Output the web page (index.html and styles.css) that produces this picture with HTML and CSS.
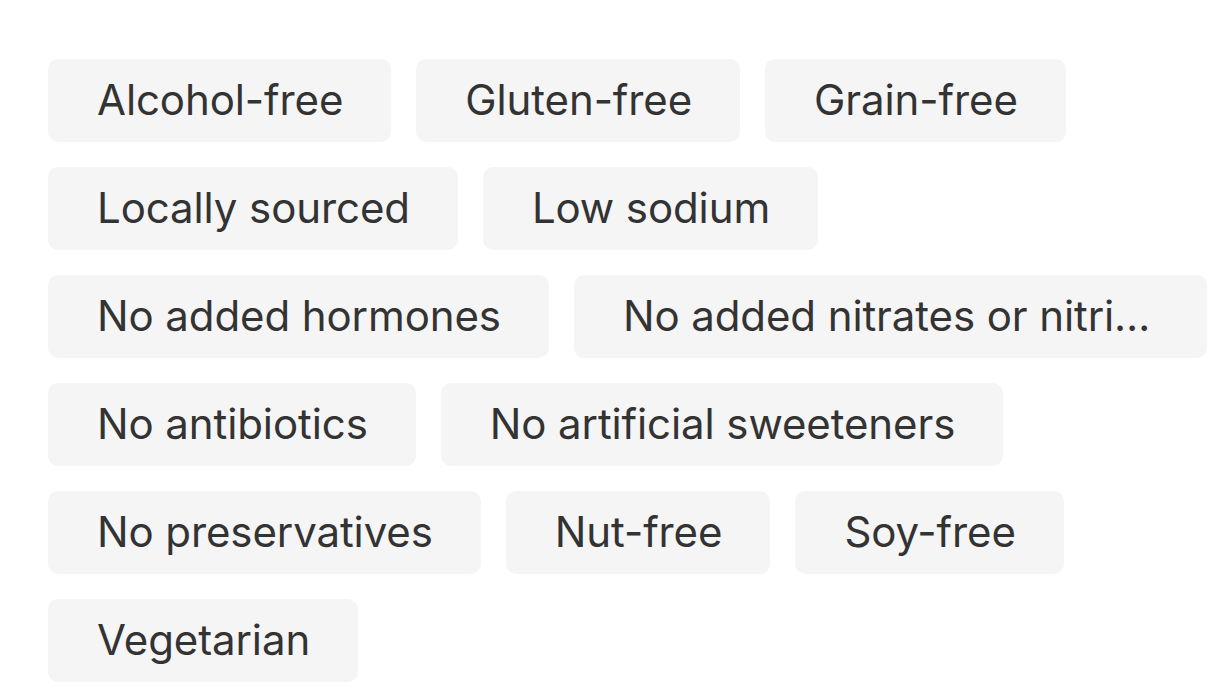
FILE: index.html
```html
<!DOCTYPE html>
<html lang="en">
<head>
<meta charset="utf-8">
<title>Tags</title>
<link rel="stylesheet" href="styles.css">
</head>
<body>
<ul class="tags">
  <li class="tag"><span class="tag-text">Alcohol-free</span></li>
  <li class="tag"><span class="tag-text">Gluten-free</span></li>
  <li class="tag"><span class="tag-text">Grain-free</span></li>
  <li class="tag"><span class="tag-text">Locally sourced</span></li>
  <li class="tag"><span class="tag-text">Low sodium</span></li>
  <li class="tag"><span class="tag-text">No added hormones</span></li>
  <li class="tag"><span class="tag-text">No added nitrates or nitrites</span></li>
  <li class="tag"><span class="tag-text">No antibiotics</span></li>
  <li class="tag"><span class="tag-text">No artificial sweeteners</span></li>
  <li class="tag"><span class="tag-text">No preservatives</span></li>
  <li class="tag"><span class="tag-text">Nut-free</span></li>
  <li class="tag"><span class="tag-text">Soy-free</span></li>
  <li class="tag"><span class="tag-text">Vegetarian</span></li>
</ul>
</body>
</html>
```
FILE: styles.css
```css
html, body {
  margin: 0;
  padding: 0;
  background: #ffffff;
}

body {
  font-family: Inter, "Noto Sans", "Liberation Sans", sans-serif;
  color: #333333;
}

.tags {
  list-style: none;
  margin: 0;
  padding: 59px 17px 0 48px;
  display: flex;
  flex-wrap: wrap;
  gap: 25px;
}

.tag {
  box-sizing: border-box;
  height: 83px;
  max-width: 633px;
  padding: 0 48px 0 49px;
  background: #f5f5f5;
  border-radius: 10px;
  display: flex;
  align-items: center;
  min-width: 0;
}

.tag-text {
  font-size: 42px;
  line-height: 1.4;
  letter-spacing: -0.1px;
  white-space: nowrap;
  overflow: hidden;
  text-overflow: ellipsis;
}
```
